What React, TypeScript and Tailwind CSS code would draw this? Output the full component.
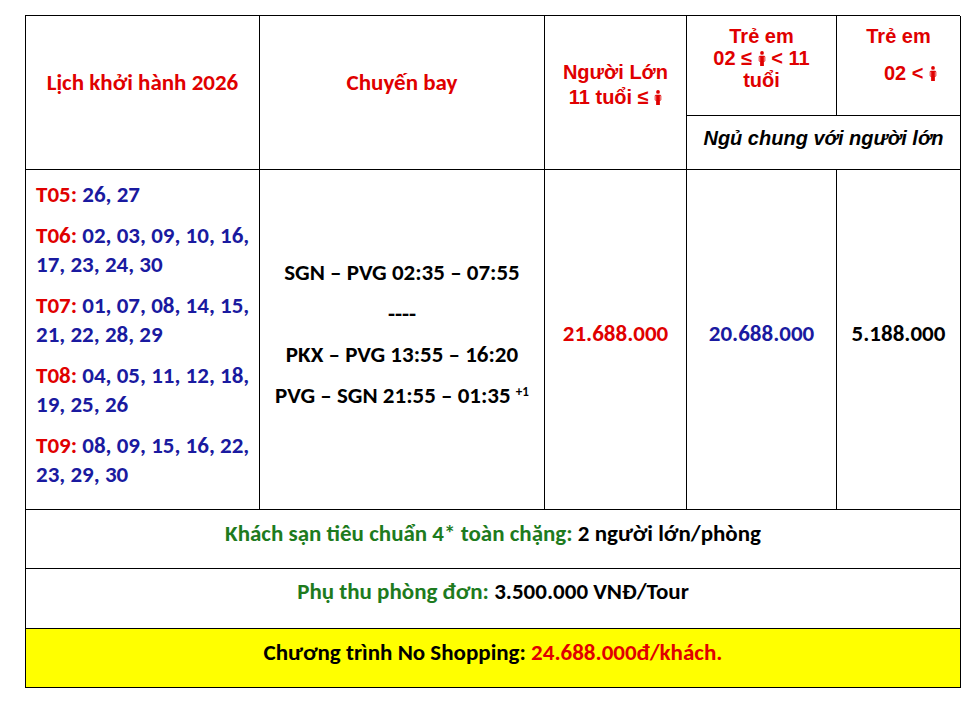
const Person = () => (
  <svg viewBox="0 0 8 16" className="inline-block w-[8px] h-[15px] align-[-1px]" fill="#e00000">
    <circle cx="4" cy="2" r="2" />
    <rect x="0.5" y="5" width="7" height="6.5" rx="1.5" />
    <rect x="2" y="10" width="4" height="6" />
    <rect x="1.4" y="6" width="0.6" height="5" fill="#fff" />
    <rect x="6" y="6" width="0.6" height="5" fill="#fff" />
  </svg>
);

const dates = [
  { m: "T05:", lines: ["26, 27"] },
  { m: "T06:", lines: ["02, 03, 09, 10, 16,", "17, 23, 24, 30"] },
  { m: "T07:", lines: ["01, 07, 08, 14, 15,", "21, 22, 28, 29"] },
  { m: "T08:", lines: ["04, 05, 11, 12, 18,", "19, 25, 26"] },
  { m: "T09:", lines: ["08, 09, 15, 16, 22,", "23, 29, 30"] },
];

const flights = ["SGN – PVG 02:35 – 07:55", "----", "PKX – PVG 13:55 – 16:20"];

const cell = "border-r border-b border-black flex items-center justify-center text-center";
const calibri = "font-['Carlito','Lato',sans-serif] font-bold";
const arial = "font-['Liberation_Sans',Arial,sans-serif] font-bold";

export default function App() {
  return (
    <div className="min-h-screen bg-white pl-[25px] pt-[15px]">
      <div className={`grid grid-cols-[234px_285px_142px_150px_124px] grid-rows-[100px_54px_340px_59px_60px_59px] w-[935px] border-l border-t border-black ${calibri}`}>
        {/* header */}
        <div className={`${cell} row-span-2 text-[#e00000] text-[23px] pb-[20px]`}>Lịch khởi hành 2026</div>
        <div className={`${cell} row-span-2 text-[#e00000] text-[23px] pb-[20px]`}>Chuyến bay</div>
        <div className={`${cell} row-span-2 flex-col text-[#e00000] text-[20px] leading-[25px] pb-[16px] ${arial}`}>
          <span>Người Lớn</span>
          <span>11 tuổi ≤ <Person /></span>
        </div>
        <div className={`${cell} flex-col justify-start pt-[9px] text-[#e00000] text-[20px] leading-[22px] ${arial}`}>
          <span>Trẻ em</span>
          <span>02 ≤ <Person /> &lt; 11</span>
          <span>tuổi</span>
        </div>
        <div className={`${cell} flex-col justify-start pt-[9px] text-[#e00000] text-[20px] ${arial}`}>
          <span className="leading-[22px]">Trẻ em</span>
          <span className="leading-[22px] mt-[15px] pl-[24px]">02 &lt; <Person /></span>
        </div>
        <div className={`${cell} col-span-2 text-black italic text-[20px] pb-[10px] ${arial}`}>Ngủ chung với người lớn</div>

        {/* body */}
        <div className="border-r border-b border-black flex flex-col justify-center gap-[12px] pl-[10px] text-[23px] leading-[29px] pb-[10px]">
          {dates.map((d) => (
            <div key={d.m} className="text-[#1a1aa0]">
              {d.lines.map((l, i) => (
                <div key={i} className="whitespace-nowrap">
                  {i === 0 && <span className="text-[#e00000]">{d.m} </span>}
                  {l}
                </div>
              ))}
            </div>
          ))}
        </div>
        <div className={`${cell} flex-col gap-[12px] text-[23px] leading-[29px] text-black pb-[12px]`}>
          {flights.map((f) => (
            <div key={f}>{f}</div>
          ))}
          <div>
            PVG – SGN 21:55 – 01:35 <sup className="text-[13px]">+1</sup>
          </div>
        </div>
        <div className={`${cell} text-[23px] text-[#e00000] pb-[12px]`}>21.688.000</div>
        <div className={`${cell} text-[23px] text-[#1a1aa0] pb-[12px]`}>20.688.000</div>
        <div className={`${cell} text-[23px] text-black pb-[12px]`}>5.188.000</div>

        {/* footer */}
        <div className={`${cell} col-span-5 text-[23px] pb-[12px]`}>
          <span className="text-[#1e7b1e]">Khách sạn tiêu chuẩn 4* toàn chặng:</span>
          <span className="text-black">&nbsp;2 người lớn/phòng</span>
        </div>
        <div className={`${cell} col-span-5 text-[23px] pb-[14px]`}>
          <span className="text-[#1e7b1e]">Phụ thu phòng đơn:</span>
          <span className="text-black">&nbsp;3.500.000 VNĐ/Tour</span>
        </div>
        <div className={`${cell} col-span-5 text-[23px] pb-[12px] bg-[#ffff00]`}>
          <span className="text-black">Chương trình No Shopping:</span>
          <span className="text-[#e00000]">&nbsp;24.688.000đ/khách.</span>
        </div>
      </div>
    </div>
  );
}
